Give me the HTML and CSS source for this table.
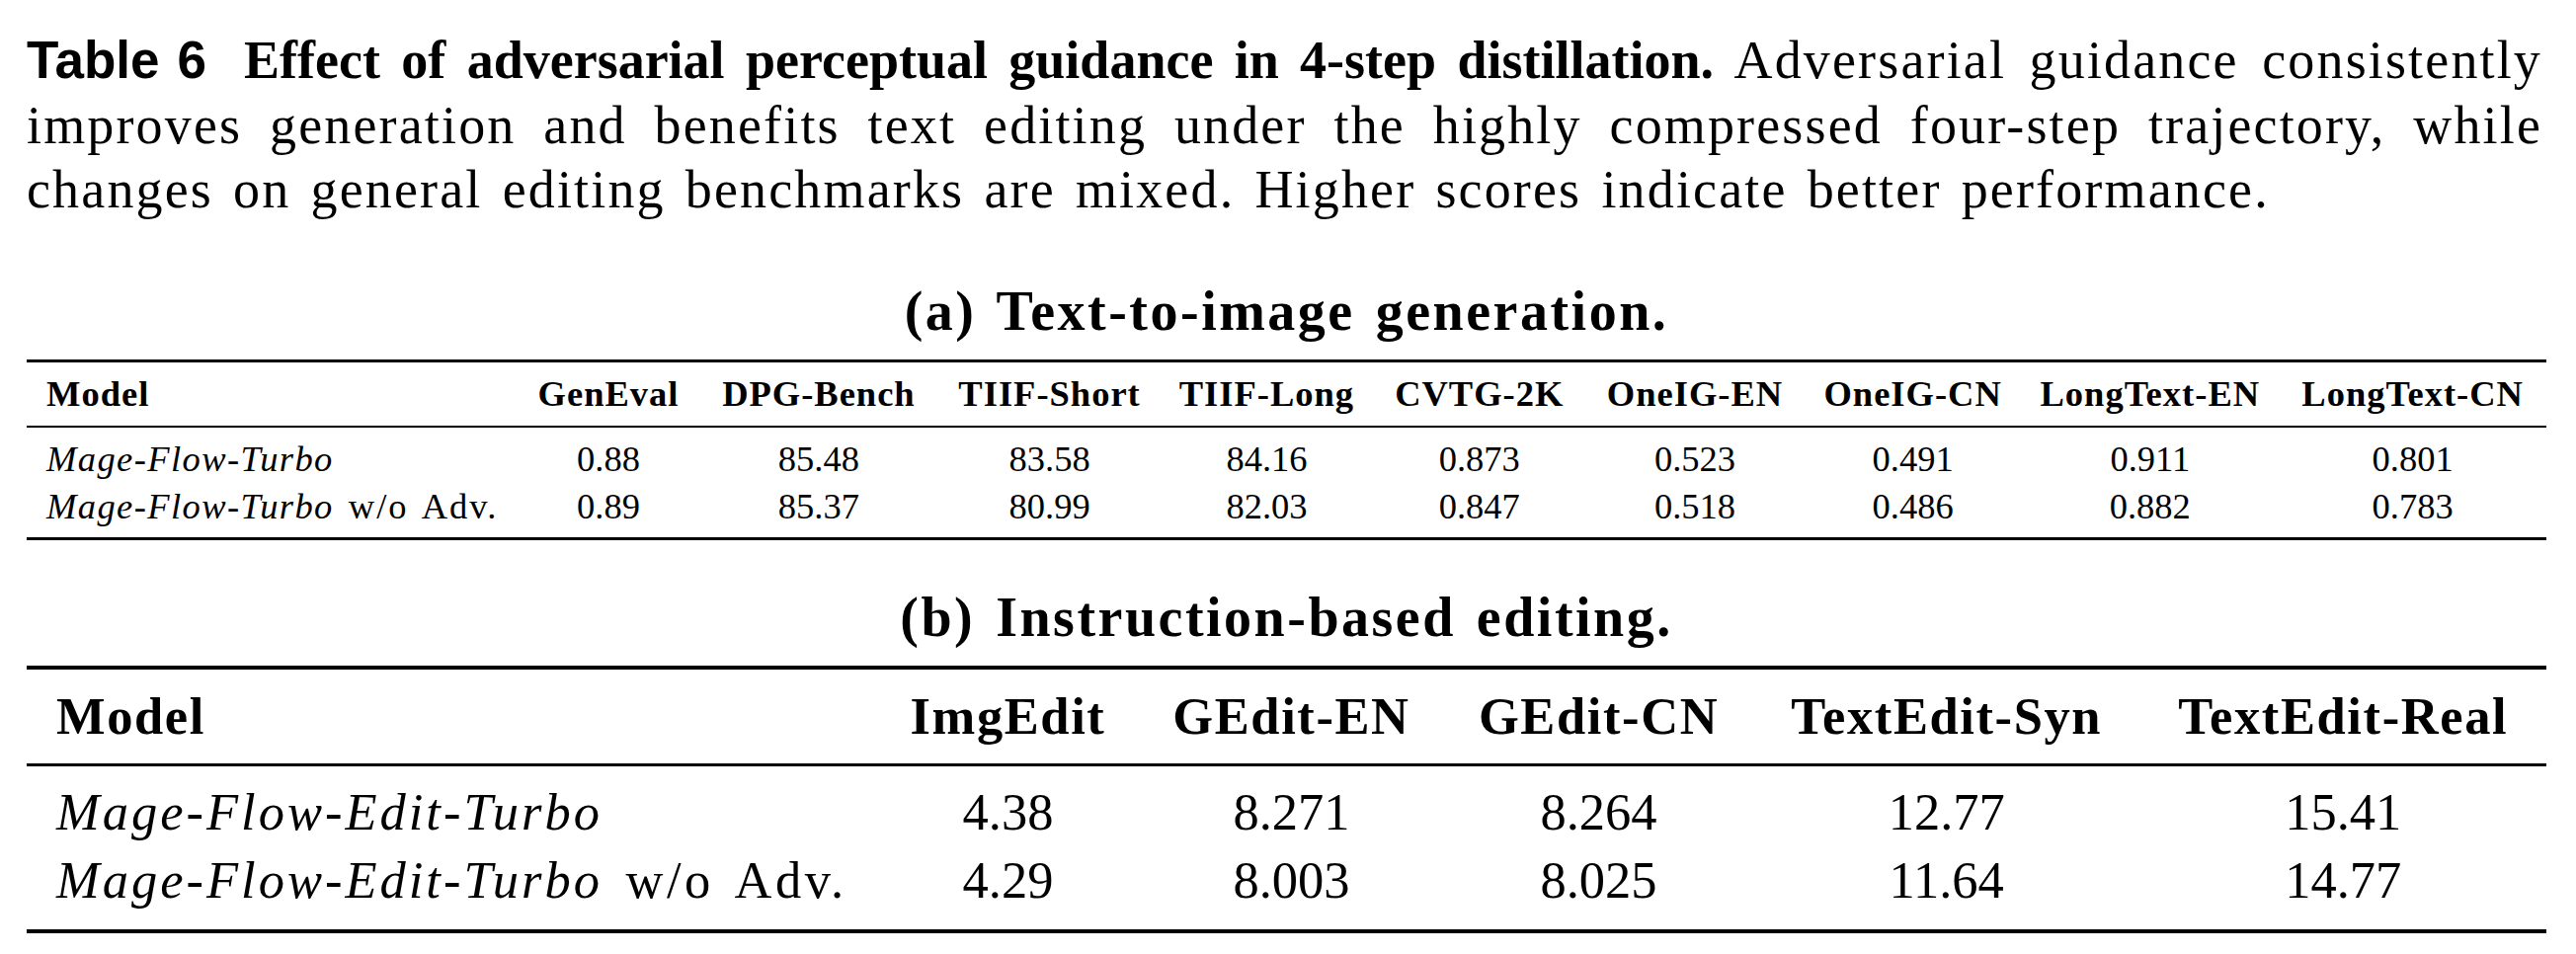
FILE: index.html
```html
<!DOCTYPE html>
<html lang="en">
<head>
<meta charset="utf-8">
<title>Table 6</title>
<link rel="stylesheet" href="styles.css">
</head>
<body>
<div class="page">
  <div class="caption">
    <div class="line"><span class="tag">Table 6</span><b class="lead">Effect of adversarial perceptual guidance in 4-step distillation.</b> Adversarial guidance consistently</div>
    <div class="line">improves generation and benefits text editing under the highly compressed four-step trajectory, while</div>
    <div class="line last">changes on general editing benchmarks are mixed. Higher scores indicate better performance.</div>
  </div>

  <div class="subtitle">(a) Text-to-image generation.</div>
  <table class="tbl tbl-a">
    <colgroup>
      <col class="a-model">
      <col class="a-geneval">
      <col class="a-dpg">
      <col class="a-tiifs">
      <col class="a-tiifl">
      <col class="a-cvtg">
      <col class="a-oneen">
      <col class="a-onecn">
      <col class="a-lten">
      <col class="a-ltcn">
    </colgroup>
    <thead>
      <tr>
        <th class="first">Model</th>
        <th>GenEval</th>
        <th>DPG-Bench</th>
        <th>TIIF-Short</th>
        <th>TIIF-Long</th>
        <th>CVTG-2K</th>
        <th>OneIG-EN</th>
        <th>OneIG-CN</th>
        <th>LongText-EN</th>
        <th>LongText-CN</th>
      </tr>
    </thead>
    <tbody>
      <tr>
        <td class="first model"><i>Mage-Flow-Turbo</i></td>
        <td>0.88</td><td>85.48</td><td>83.58</td><td>84.16</td><td>0.873</td><td>0.523</td><td>0.491</td><td>0.911</td><td>0.801</td>
      </tr>
      <tr>
        <td class="first model"><i>Mage-Flow-Turbo</i> w/o Adv.</td>
        <td>0.89</td><td>85.37</td><td>80.99</td><td>82.03</td><td>0.847</td><td>0.518</td><td>0.486</td><td>0.882</td><td>0.783</td>
      </tr>
    </tbody>
  </table>

  <div class="subtitle sub-b">(b) Instruction-based editing.</div>
  <table class="tbl tbl-b">
    <colgroup>
      <col class="b-model">
      <col class="b-img">
      <col class="b-gen">
      <col class="b-gcn">
      <col class="b-tsyn">
      <col class="b-treal">
    </colgroup>
    <thead>
      <tr>
        <th class="first">Model</th>
        <th>ImgEdit</th>
        <th>GEdit-EN</th>
        <th>GEdit-CN</th>
        <th>TextEdit-Syn</th>
        <th>TextEdit-Real</th>
      </tr>
    </thead>
    <tbody>
      <tr>
        <td class="first model"><i>Mage-Flow-Edit-Turbo</i></td>
        <td>4.38</td><td>8.271</td><td>8.264</td><td>12.77</td><td>15.41</td>
      </tr>
      <tr>
        <td class="first model"><i>Mage-Flow-Edit-Turbo</i> w/o Adv.</td>
        <td>4.29</td><td>8.003</td><td>8.025</td><td>11.64</td><td>14.77</td>
      </tr>
    </tbody>
  </table>
</div>
</body>
</html>
```

FILE: styles.css
```css
html, body {
  margin: 0;
  padding: 0;
  background: #ffffff;
  color: #000000;
}

.page {
  width: 2551px;
  margin-left: 27px;
  font-family: "Liberation Serif", "Times New Roman", serif;
}

/* ---------- caption ---------- */
.caption {
  margin-top: 28px;
  padding: 0 4px 0 0;
  font-size: 54px;
  line-height: 65.5px;
  letter-spacing: 2.15px;
  word-spacing: 4.5px;
}

.line {
  text-align: justify;
  text-align-last: justify;
}

.line.last {
  text-align-last: left;
}

.tag {
  font-family: "Liberation Sans", Arial, sans-serif;
  font-weight: 700;
  font-size: 53px;
  letter-spacing: 0;
  word-spacing: 0;
  margin-right: 38px;
}

.lead {
  font-weight: 700;
  letter-spacing: 0;
}

/* ---------- sub-table titles ---------- */
.subtitle {
  margin-top: 56px;
  font-size: 56px;
  line-height: 66px;
  font-weight: 700;
  text-align: center;
  letter-spacing: 2.5px;
  word-spacing: 4.5px;
}

.sub-b {
  margin-top: 45px;
}

/* ---------- tables ---------- */
.tbl {
  width: 100%;
  table-layout: fixed;
  margin-top: 16px;
  border-collapse: separate;
  border-spacing: 0;
}

.tbl th,
.tbl td {
  white-space: nowrap;
  text-align: center;
  vertical-align: top;
  padding: 0;
}

.tbl th {
  font-weight: 700;
  border-top-style: solid;
  border-bottom-style: solid;
  border-color: #000;
}

.tbl .first {
  text-align: left;
}

.tbl tbody tr:last-child td {
  border-bottom-style: solid;
  border-color: #000;
}

/* (a) compact text-to-image table */
.a-model   { width: 19.52%; }
.a-geneval { width: 7.14%; }
.a-dpg     { width: 9.55%; }
.a-tiifs   { width: 8.77%; }
.a-tiifl   { width: 8.47%; }
.a-cvtg    { width: 8.41%; }
.a-oneen   { width: 8.70%; }
.a-onecn   { width: 8.60%; }
.a-lten    { width: 10.23%; }
.a-ltcn    { width: 10.61%; }

.tbl-a {
  font-size: 36.5px;
}

.tbl-a th {
  line-height: 64px;
  letter-spacing: 1px;
  border-top-width: 3px;
  border-bottom-width: 2px;
}

.tbl-a td {
  line-height: 48px;
}

.tbl-a .first {
  padding-left: 20px;
}

.tbl-a tbody tr:first-child td {
  padding-top: 8px;
}

.tbl-a tbody tr:last-child td {
  padding-bottom: 7px;
  border-bottom-width: 3px;
}

.tbl-a .model {
  letter-spacing: 2px;
  word-spacing: 4px;
}

.tbl-a .model i {
  letter-spacing: 1.4px;
}

/* (b) instruction-based editing table */
.b-model { width: 33.76%; }
.b-img   { width: 10.37%; }
.b-gen   { width: 12.13%; }
.b-gcn   { width: 12.26%; }
.b-tsyn  { width: 15.35%; }
.b-treal { width: 16.13%; }

.tbl-b {
  font-size: 52.5px;
}

.tbl-b th {
  line-height: 95px;
  letter-spacing: 1.6px;
  border-top-width: 4px;
  border-bottom-width: 3px;
}

.tbl-b td {
  line-height: 69.3px;
}

.tbl-b .first {
  padding-left: 30px;
}

.tbl-b tbody tr:first-child td {
  padding-top: 12.6px;
}

.tbl-b tbody tr:last-child td {
  padding-bottom: 14px;
  border-bottom-width: 4px;
}

.tbl-b .model {
  letter-spacing: 3.5px;
  word-spacing: 7px;
}

.tbl-b .model i {
  letter-spacing: 3px;
}
```
